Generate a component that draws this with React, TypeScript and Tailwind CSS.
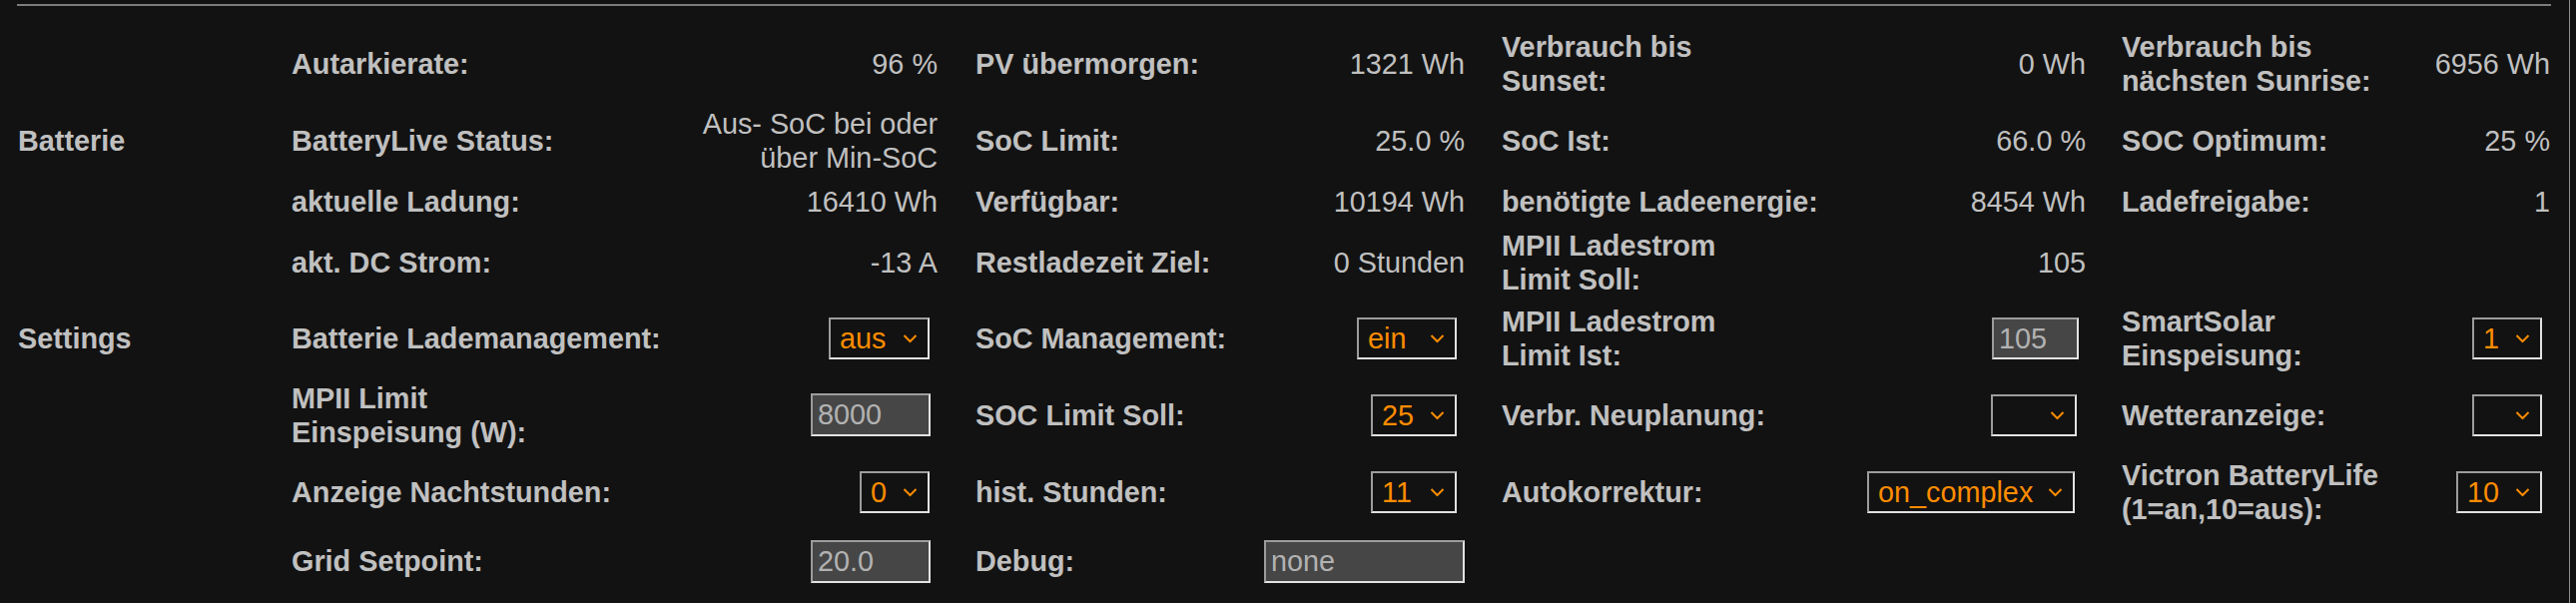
import React from "react";

type Cell = React.ReactNode;

const FONT = { fontFamily: '"Liberation Sans", Arial, Helvetica, sans-serif' };

function Chevron() {
  return (
    <svg
      className="absolute right-[10px] top-1/2 -translate-y-1/2 pointer-events-none"
      width="15"
      height="9"
      viewBox="0 0 15 9"
      fill="none"
    >
      <path d="M1.5 1.5 L7.5 7.5 L13.5 1.5" stroke="#ff8c00" strokeWidth="2" />
    </svg>
  );
}

function Sel({ v, w, mr = "mr-[8px]" }: { v: string; w: string; mr?: string }) {
  return (
    <div
      className={`relative inline-flex h-[42px] ${w} ${mr} border-2 border-t-[#9c9c9c] border-l-[#9c9c9c] border-b-[#e2e2e2] border-r-[#e2e2e2] bg-[#121212]`}
    >
      <select
        defaultValue={v}
        className="appearance-none w-full h-full bg-transparent pl-[9px] pr-[28px] text-[#ff8c00] outline-none leading-[34px]"
      >
        <option value={v}>{v}</option>
      </select>
      <Chevron />
    </div>
  );
}

function Inp({ v, w, mr = "mr-[7px]", h = "h-[43px]" }: { v: string; w: string; mr?: string; h?: string }) {
  return (
    <input
      readOnly
      value={v}
      className={`${h} ${w} ${mr} border-2 border-t-[#9c9c9c] border-l-[#9c9c9c] border-b-[#e2e2e2] border-r-[#e2e2e2] bg-[#464646] text-[#b2b2b2] pl-[5px] outline-none`}
    />
  );
}

const L = (a: string, b?: string) =>
  b ? (
    <span>
      {a}
      <br />
      {b}
    </span>
  ) : (
    a
  );

const rows: Cell[][] = [
  ["", "Autarkierate:", "96 %", "PV übermorgen:", "1321 Wh", L("Verbrauch bis", "Sunset:"), "0 Wh", L("Verbrauch bis", "nächsten Sunrise:"), "6956 Wh"],
  ["Batterie", "BatteryLive Status:", <span className="text-right">Aus- SoC bei oder<br />über Min-SoC</span>, "SoC Limit:", "25.0 %", "SoC Ist:", "66.0 %", "SOC Optimum:", "25 %"],
  ["", "aktuelle Ladung:", "16410 Wh", "Verfügbar:", "10194 Wh", "benötigte Ladeenergie:", "8454 Wh", "Ladefreigabe:", "1"],
  ["", "akt. DC Strom:", "-13 A", "Restladezeit Ziel:", "0 Stunden", L("MPII Ladestrom", "Limit Soll:"), "105", "", ""],
  [
    "Settings",
    "Batterie Lademanagement:",
    <Sel v="aus" w="w-[101px]" />,
    "SoC Management:",
    <Sel v="ein" w="w-[100px]" />,
    L("MPII Ladestrom", "Limit Ist:"),
    <Inp v="105" w="w-[87px]" h="h-[42px]" />,
    L("SmartSolar", "Einspeisung:"),
    <Sel v="1" w="w-[70px]" />,
  ],
  [
    "",
    L("MPII Limit", "Einspeisung (W):"),
    <Inp v="8000" w="w-[120px]" />,
    "SOC Limit Soll:",
    <Sel v="25" w="w-[86px]" />,
    "Verbr. Neuplanung:",
    <Sel v="" w="w-[86px]" mr="mr-[9px]" />,
    "Wetteranzeige:",
    <Sel v="" w="w-[70px]" />,
  ],
  [
    "",
    "Anzeige Nachtstunden:",
    <Sel v="0" w="w-[70px]" />,
    "hist. Stunden:",
    <Sel v="11" w="w-[86px]" />,
    "Autokorrektur:",
    <Sel v="on_complex" w="w-[208px]" mr="mr-[11px]" />,
    L("Victron BatteryLife", "(1=an,10=aus):"),
    <Sel v="10" w="w-[86px]" />,
  ],
  ["", "Grid Setpoint:", <Inp v="20.0" w="w-[120px]" />, "Debug:", <Inp v="none" w="w-[201px]" mr="mr-0" />, "", "", "", ""],
];

const colClass = [
  "pl-[1px] font-bold",
  "font-bold",
  "justify-end text-right",
  "pl-[38px] font-bold",
  "justify-end text-right",
  "pl-[37px] font-bold",
  "justify-end text-right",
  "pl-[36px] font-bold",
  "justify-end text-right",
];

export default function App() {
  return (
    <div
      className="flex w-full h-[604px] bg-[#121212] text-[#c0c0c0] text-[28.8px] leading-[34px] overflow-hidden"
      style={FONT}
    >
      <div className="w-[2573px] shrink-0 pt-[4px]">
        <div className="ml-[17px] w-[2538px] h-[2px] bg-[#7c7c7c]" />
        <div className="ml-[17px] mt-[19px] grid grid-cols-[275px_400px_247px_318px_210px_377px_245px_316px_149px] grid-rows-[78px_76px_45px_77px_76px_77px_77px_62px]">
          {rows.map((r, ri) =>
            r.map((c, ci) => (
              <div key={`${ri}-${ci}`} className={`flex items-center whitespace-nowrap ${colClass[ci]}`}>
                {c}
              </div>
            ))
          )}
        </div>
      </div>
      <div className="w-px shrink-0 bg-[#8e8e8e]" />
      <div className="flex-1" />
    </div>
  );
}
